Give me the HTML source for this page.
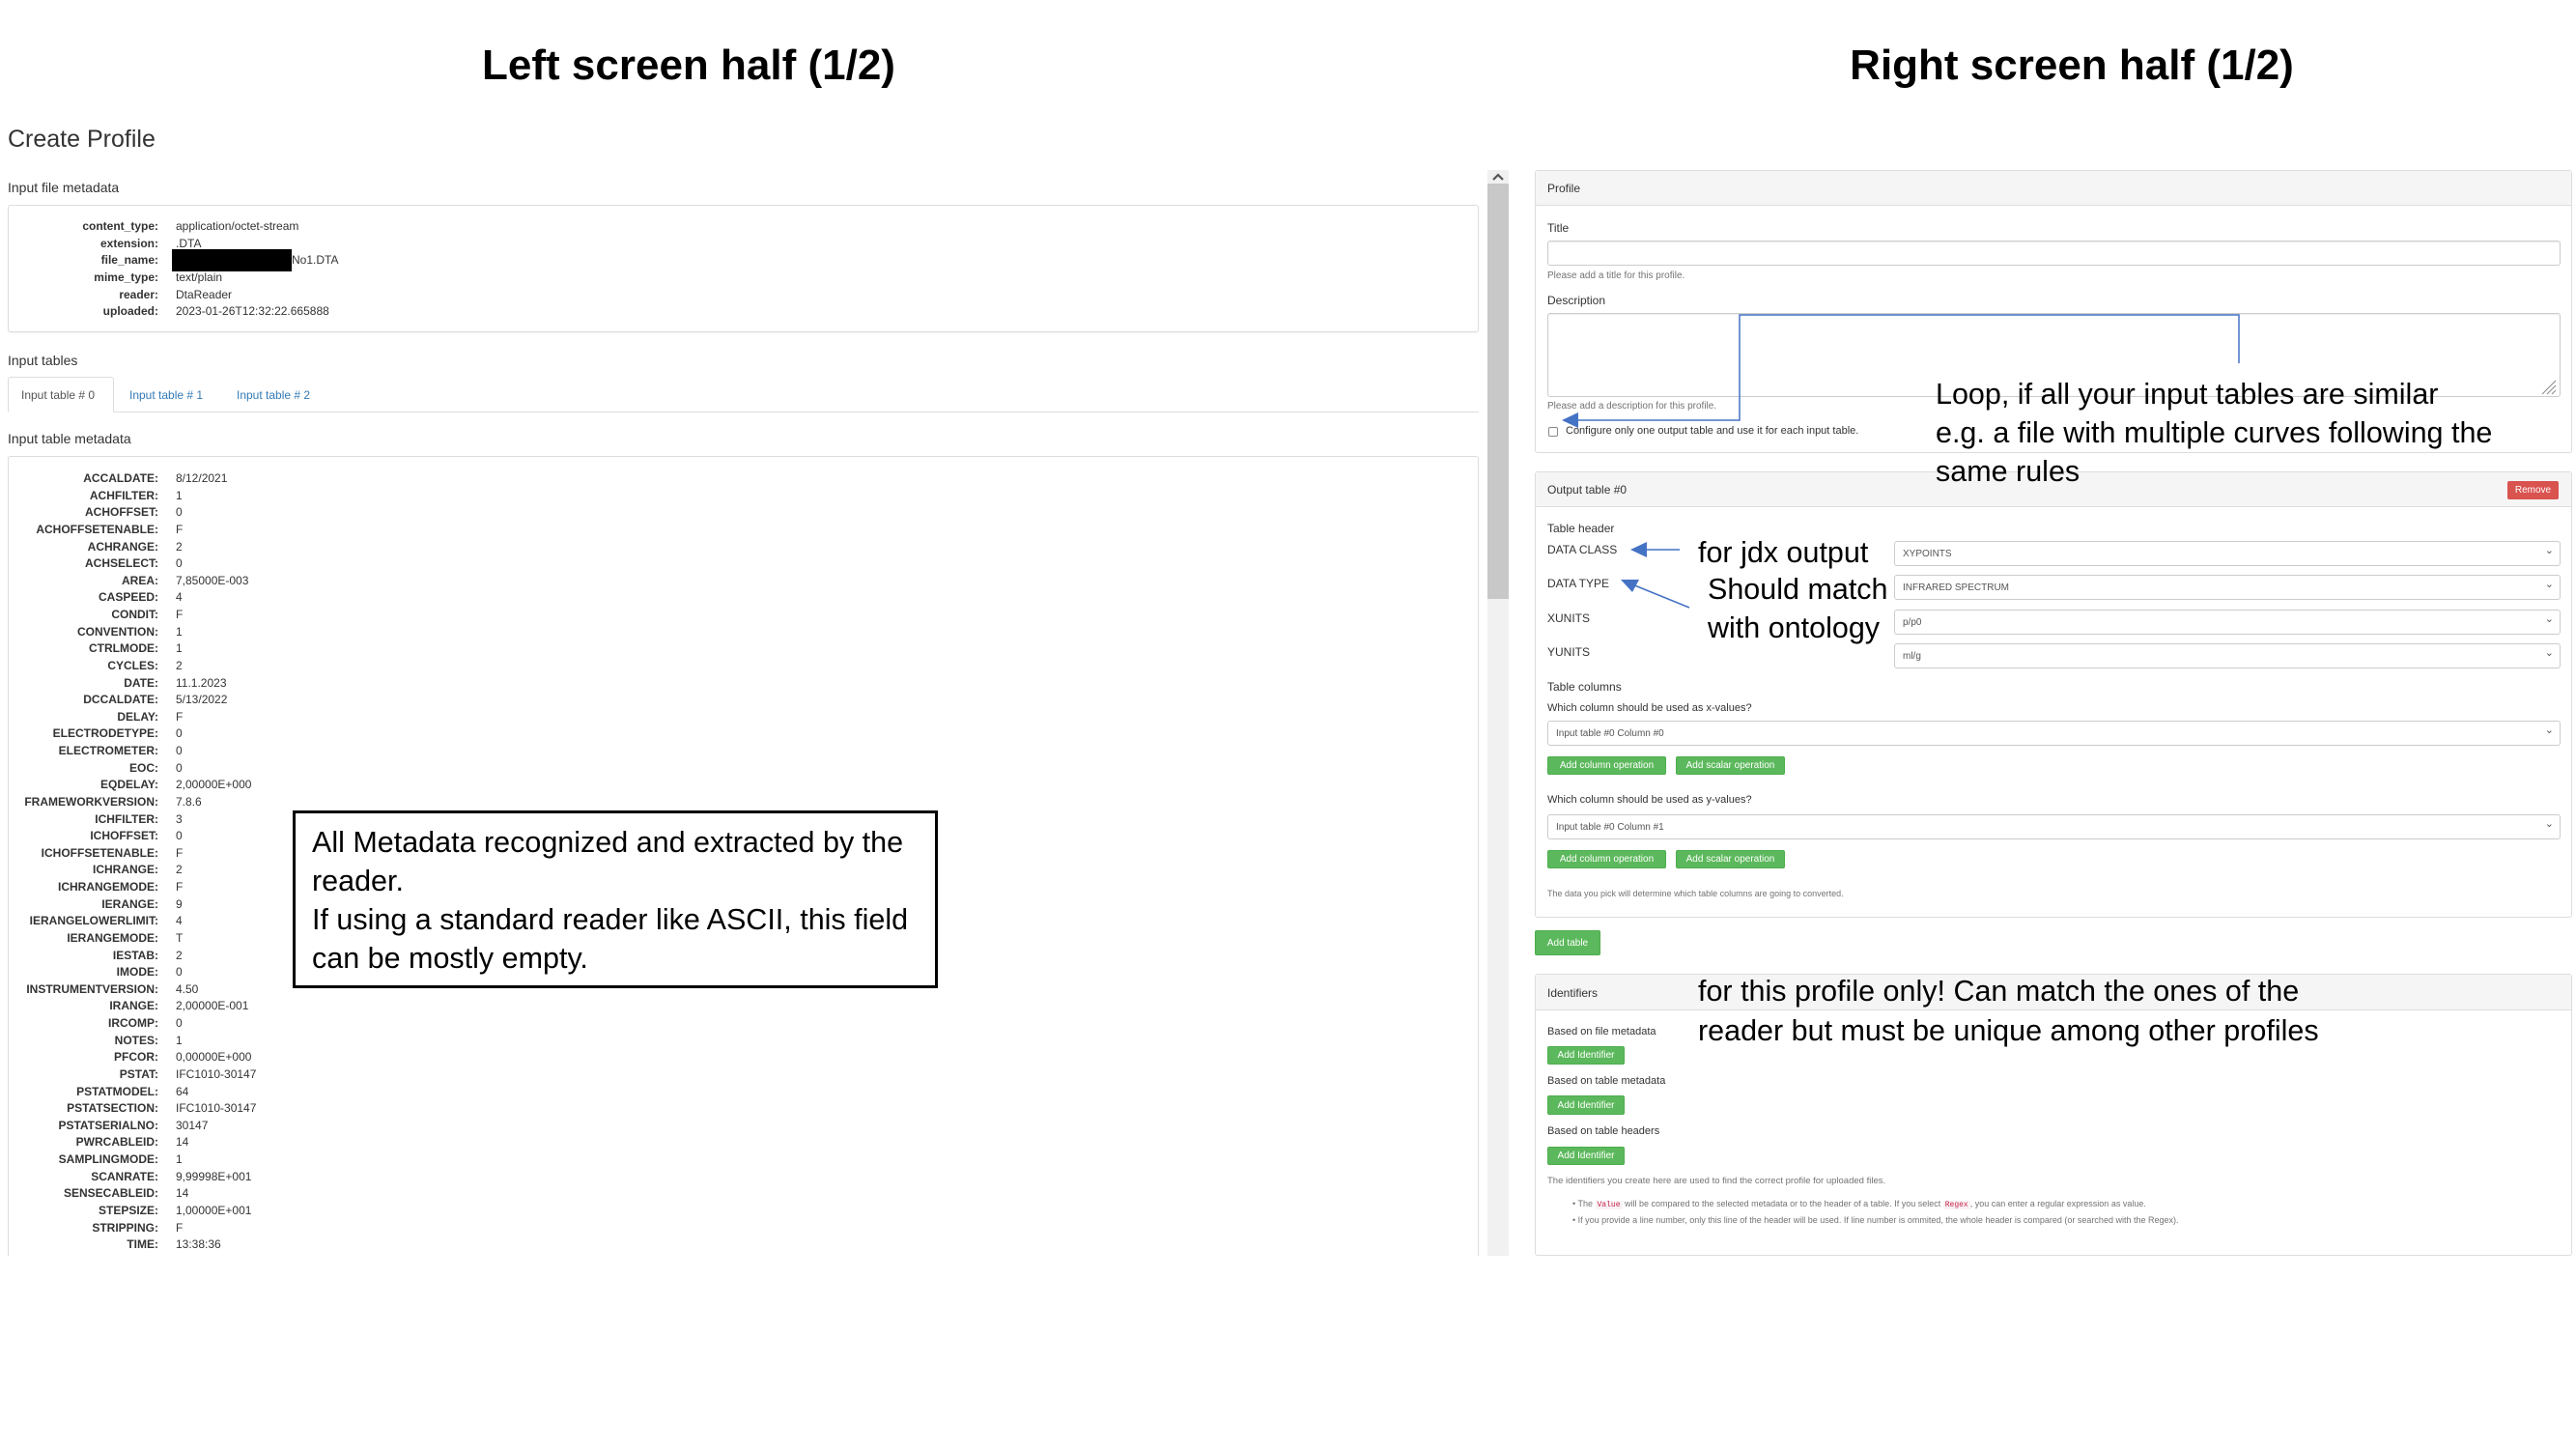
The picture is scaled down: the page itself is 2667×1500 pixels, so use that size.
<!DOCTYPE html>
<html><head><meta charset="utf-8"><style>
*{margin:0;padding:0;box-sizing:border-box}
body{width:2667px;height:1500px;background:#fff;position:relative;overflow:hidden;font-family:"Liberation Sans",Arial,sans-serif;color:#333}
.a{position:absolute;white-space:nowrap}
.h{font-weight:bold;font-size:44px;color:#000;transform:translateX(-50%);line-height:1}
.box{position:absolute;border:1px solid #ddd;border-radius:3px;box-shadow:0 1px 1px rgba(0,0,0,.05)}
.rows{position:absolute;font-size:12px;line-height:17.63px}
.rows .r{position:relative;height:17.63px;white-space:nowrap}
.rows .k{position:absolute;right:0;font-weight:bold;text-align:right;white-space:nowrap}
.rows .v{position:absolute;white-space:nowrap}
.card{position:absolute;left:1589px;width:1074px;border:1px solid #ddd;border-radius:3px;background:#fff}
.ch{background:#f5f5f5;border-bottom:1px solid #ddd;height:36px;font-size:12px;padding:11px 12px}
.lbl{font-size:12px}
.help{font-size:10px;color:#737373}
.inp{position:absolute;border:1px solid #ccc;border-radius:3px;box-shadow:inset 0 1px 1px rgba(0,0,0,.075);background:#fff}
.sel{position:absolute;border:1px solid #ccc;border-radius:3px;background:#fff;font-size:10px;color:#555;padding-left:8px;display:flex;align-items:center}
.sel:after{content:"\2304";position:absolute;right:6px;top:2px;font-size:11px;color:#555}
.btn{position:absolute;background:#5cb85c;border:1px solid #4cae4c;border-radius:2px;color:#fff;font-size:10px;display:flex;align-items:center;justify-content:center}
.note{font-size:30.5px;color:#000;line-height:40px}
</style></head><body>
<div class="a h" style="left:713px;top:46px">Left screen half (1/2)</div>
<div class="a h" style="left:2145px;top:46px">Right screen half (1/2)</div>

<div class="a" style="left:8px;top:130px;font-size:25px;color:#333">Create Profile</div>
<div class="a" style="left:8px;top:186px;font-size:14px">Input file metadata</div>
<div class="box" style="left:8px;top:212px;width:1523px;height:132px"></div>
<div class="rows" style="left:0;top:226px;width:164px">
<div class="r"><span class="k">content_type:</span><span class="v" style="left:182px">application/octet-stream</span></div>
<div class="r"><span class="k">extension:</span><span class="v" style="left:182px">.DTA</span></div>
<div class="r"><span class="k">file_name:</span><span class="v" style="left:302px">No1.DTA</span></div>
<div class="r"><span class="k">mime_type:</span><span class="v" style="left:182px">text/plain</span></div>
<div class="r"><span class="k">reader:</span><span class="v" style="left:182px">DtaReader</span></div>
<div class="r"><span class="k">uploaded:</span><span class="v" style="left:182px">2023-01-26T12:32:22.665888</span></div>
</div>
<div class="a" style="left:178px;top:258px;width:124px;height:23px;background:#000"></div>

<div class="a" style="left:8px;top:365px;font-size:14px">Input tables</div>
<div class="a" style="left:8px;top:426px;width:1523px;border-top:1px solid #ddd"></div>
<div class="a" style="left:8px;top:390px;width:110px;height:37px;border:1px solid #ddd;border-bottom:1px solid #fff;border-radius:3px 3px 0 0;background:#fff"></div>
<div class="a" style="left:22px;top:402px;font-size:12px;color:#555">Input table # 0</div>
<div class="a" style="left:134px;top:402px;font-size:12px;color:#337ab7">Input table # 1</div>
<div class="a" style="left:245px;top:402px;font-size:12px;color:#337ab7">Input table # 2</div>

<div class="a" style="left:8px;top:446px;font-size:14px">Input table metadata</div>
<div class="a" style="left:8px;top:472px;width:1523px;height:840px;border:1px solid #ddd;border-bottom:none;border-radius:3px 3px 0 0"></div>
<div class="a" style="left:0;top:1300px;width:1540px;height:200px;background:#fff"></div>
<div class="rows" style="left:0;top:487px;width:164px">
<div class="r"><span class="k">ACCALDATE:</span><span class="v" style="left:182px">8/12/2021</span></div>
<div class="r"><span class="k">ACHFILTER:</span><span class="v" style="left:182px">1</span></div>
<div class="r"><span class="k">ACHOFFSET:</span><span class="v" style="left:182px">0</span></div>
<div class="r"><span class="k">ACHOFFSETENABLE:</span><span class="v" style="left:182px">F</span></div>
<div class="r"><span class="k">ACHRANGE:</span><span class="v" style="left:182px">2</span></div>
<div class="r"><span class="k">ACHSELECT:</span><span class="v" style="left:182px">0</span></div>
<div class="r"><span class="k">AREA:</span><span class="v" style="left:182px">7,85000E-003</span></div>
<div class="r"><span class="k">CASPEED:</span><span class="v" style="left:182px">4</span></div>
<div class="r"><span class="k">CONDIT:</span><span class="v" style="left:182px">F</span></div>
<div class="r"><span class="k">CONVENTION:</span><span class="v" style="left:182px">1</span></div>
<div class="r"><span class="k">CTRLMODE:</span><span class="v" style="left:182px">1</span></div>
<div class="r"><span class="k">CYCLES:</span><span class="v" style="left:182px">2</span></div>
<div class="r"><span class="k">DATE:</span><span class="v" style="left:182px">11.1.2023</span></div>
<div class="r"><span class="k">DCCALDATE:</span><span class="v" style="left:182px">5/13/2022</span></div>
<div class="r"><span class="k">DELAY:</span><span class="v" style="left:182px">F</span></div>
<div class="r"><span class="k">ELECTRODETYPE:</span><span class="v" style="left:182px">0</span></div>
<div class="r"><span class="k">ELECTROMETER:</span><span class="v" style="left:182px">0</span></div>
<div class="r"><span class="k">EOC:</span><span class="v" style="left:182px">0</span></div>
<div class="r"><span class="k">EQDELAY:</span><span class="v" style="left:182px">2,00000E+000</span></div>
<div class="r"><span class="k">FRAMEWORKVERSION:</span><span class="v" style="left:182px">7.8.6</span></div>
<div class="r"><span class="k">ICHFILTER:</span><span class="v" style="left:182px">3</span></div>
<div class="r"><span class="k">ICHOFFSET:</span><span class="v" style="left:182px">0</span></div>
<div class="r"><span class="k">ICHOFFSETENABLE:</span><span class="v" style="left:182px">F</span></div>
<div class="r"><span class="k">ICHRANGE:</span><span class="v" style="left:182px">2</span></div>
<div class="r"><span class="k">ICHRANGEMODE:</span><span class="v" style="left:182px">F</span></div>
<div class="r"><span class="k">IERANGE:</span><span class="v" style="left:182px">9</span></div>
<div class="r"><span class="k">IERANGELOWERLIMIT:</span><span class="v" style="left:182px">4</span></div>
<div class="r"><span class="k">IERANGEMODE:</span><span class="v" style="left:182px">T</span></div>
<div class="r"><span class="k">IESTAB:</span><span class="v" style="left:182px">2</span></div>
<div class="r"><span class="k">IMODE:</span><span class="v" style="left:182px">0</span></div>
<div class="r"><span class="k">INSTRUMENTVERSION:</span><span class="v" style="left:182px">4.50</span></div>
<div class="r"><span class="k">IRANGE:</span><span class="v" style="left:182px">2,00000E-001</span></div>
<div class="r"><span class="k">IRCOMP:</span><span class="v" style="left:182px">0</span></div>
<div class="r"><span class="k">NOTES:</span><span class="v" style="left:182px">1</span></div>
<div class="r"><span class="k">PFCOR:</span><span class="v" style="left:182px">0,00000E+000</span></div>
<div class="r"><span class="k">PSTAT:</span><span class="v" style="left:182px">IFC1010-30147</span></div>
<div class="r"><span class="k">PSTATMODEL:</span><span class="v" style="left:182px">64</span></div>
<div class="r"><span class="k">PSTATSECTION:</span><span class="v" style="left:182px">IFC1010-30147</span></div>
<div class="r"><span class="k">PSTATSERIALNO:</span><span class="v" style="left:182px">30147</span></div>
<div class="r"><span class="k">PWRCABLEID:</span><span class="v" style="left:182px">14</span></div>
<div class="r"><span class="k">SAMPLINGMODE:</span><span class="v" style="left:182px">1</span></div>
<div class="r"><span class="k">SCANRATE:</span><span class="v" style="left:182px">9,99998E+001</span></div>
<div class="r"><span class="k">SENSECABLEID:</span><span class="v" style="left:182px">14</span></div>
<div class="r"><span class="k">STEPSIZE:</span><span class="v" style="left:182px">1,00000E+001</span></div>
<div class="r"><span class="k">STRIPPING:</span><span class="v" style="left:182px">F</span></div>
<div class="r"><span class="k">TIME:</span><span class="v" style="left:182px">13:38:36</span></div>
</div>

<div class="a" style="left:303px;top:839px;width:668px;height:184px;border:3px solid #000;background:#fff"></div>
<div class="a note" style="left:323px;top:852px">All Metadata recognized and extracted by the<br>reader.<br>If using a standard reader like ASCII, this field<br>can be mostly empty.</div>

<!-- scrollbar -->
<div class="a" style="left:1540px;top:176px;width:22px;height:1124px;background:#f1f1f1"></div>
<div class="a" style="left:1540px;top:190px;width:22px;height:430px;background:#c8c8c8"></div>
<svg class="a" style="left:1545px;top:179px" width="12" height="8"><path d="M1 7 L6 2 L11 7" stroke="#555" stroke-width="2.2" fill="none"/></svg>

<!-- right -->
<div class="card" style="top:176px;height:293px">
<div class="ch">Profile</div>
</div>
<div class="a lbl" style="left:1602px;top:229px">Title</div>
<div class="inp" style="left:1602px;top:249px;width:1049px;height:26px"></div>
<div class="a help" style="left:1602px;top:280px">Please add a title for this profile.</div>
<div class="a lbl" style="left:1602px;top:304px">Description</div>
<div class="inp" style="left:1602px;top:324px;width:1049px;height:87px"></div>
<svg class="a" style="left:2628px;top:390px" width="20" height="20"><path d="M18 4 L4 18 M18 9 L9 18 M18 14 L14 18" stroke="#888" stroke-width="1"/></svg>
<div class="a help" style="left:1602px;top:415px">Please add a description for this profile.</div>
<div class="a" style="left:1603px;top:442px;width:10px;height:10px;border:1px solid #888;border-radius:2px"></div>
<div class="a" style="left:1621px;top:440px;font-size:11px">Configure only one output table and use it for each input table.</div>

<div class="card" style="top:488px;height:462px">
<div class="ch">Output table #0</div>
</div>
<div class="a" style="left:2596px;top:498px;width:53px;height:19px;background:#d9534f;border-radius:2px;color:#fff;font-size:10px;display:flex;align-items:center;justify-content:center">Remove</div>
<div class="a lbl" style="left:1602px;top:540px">Table header</div>
<div class="a lbl" style="left:1602px;top:562px">DATA CLASS</div>
<div class="a lbl" style="left:1602px;top:597px">DATA TYPE</div>
<div class="a lbl" style="left:1602px;top:633px">XUNITS</div>
<div class="a lbl" style="left:1602px;top:668px">YUNITS</div>
<div class="sel" style="left:1961px;top:560px;width:690px;height:26px">XYPOINTS</div>
<div class="sel" style="left:1961px;top:595px;width:690px;height:26px">INFRARED SPECTRUM</div>
<div class="sel" style="left:1961px;top:631px;width:690px;height:26px">p/p0</div>
<div class="sel" style="left:1961px;top:666px;width:690px;height:26px">ml/g</div>
<div class="a lbl" style="left:1602px;top:704px">Table columns</div>
<div class="a" style="left:1602px;top:727px;font-size:11px">Which column should be used as x-values?</div>
<div class="sel" style="left:1602px;top:746px;width:1049px;height:26px">Input table #0 Column #0</div>
<div class="btn" style="left:1602px;top:783px;width:123px;height:19px">Add column operation</div>
<div class="btn" style="left:1735px;top:783px;width:113px;height:19px">Add scalar operation</div>
<div class="a" style="left:1602px;top:822px;font-size:11px">Which column should be used as y-values?</div>
<div class="sel" style="left:1602px;top:843px;width:1049px;height:26px">Input table #0 Column #1</div>
<div class="btn" style="left:1602px;top:880px;width:123px;height:19px">Add column operation</div>
<div class="btn" style="left:1735px;top:880px;width:113px;height:19px">Add scalar operation</div>
<div class="a help" style="left:1602px;top:920px;font-size:9px">The data you pick will determine which table columns are going to converted.</div>

<div class="btn" style="left:1589px;top:963px;width:68px;height:26px;font-size:10px">Add table</div>

<div class="card" style="top:1008px;height:292px">
<div class="ch" style="height:37px;padding-top:12px">Identifiers</div>
</div>
<div class="a" style="left:1602px;top:1062px;font-size:11px">Based on file metadata</div>
<div class="btn" style="left:1602px;top:1083px;width:80px;height:19px">Add Identifier</div>
<div class="a" style="left:1602px;top:1113px;font-size:11px">Based on table metadata</div>
<div class="btn" style="left:1602px;top:1134px;width:80px;height:20px">Add Identifier</div>
<div class="a" style="left:1602px;top:1165px;font-size:11px">Based on table headers</div>
<div class="btn" style="left:1602px;top:1187px;width:80px;height:19px">Add Identifier</div>
<div class="a help" style="left:1602px;top:1217px;font-size:9.5px">The identifiers you create here are used to find the correct profile for uploaded files.</div>
<div class="a help" style="left:1628px;top:1241px;font-size:9px">• The <span style="color:#c7254e;background:#f9f2f4;font-family:'Liberation Mono',monospace;font-size:8px;padding:0 2px">Value</span> will be compared to the selected metadata or to the header of a table. If you select <span style="color:#c7254e;background:#f9f2f4;font-family:'Liberation Mono',monospace;font-size:8px;padding:0 2px">Regex</span>, you can enter a regular expression as value.</div>
<div class="a help" style="left:1628px;top:1258px;font-size:9px">• If you provide a line number, only this line of the header will be used. If line number is ommited, the whole header is compared (or searched with the Regex).</div>

<!-- annotations on top -->
<svg class="a" style="left:0;top:0;overflow:visible" width="2667" height="1500">
<path d="M2318 376 V326 H1801 V435 H1630" stroke="#4472c4" stroke-width="1.5" fill="none"/>
<path d="M1617 435 L1634 427 L1634 443 Z" fill="#4472c4"/>
<path d="M1739 569 H1700" stroke="#4472c4" stroke-width="1.5"/>
<path d="M1688 569 L1705 561 L1705 577 Z" fill="#4472c4"/>
<path d="M1749 629 L1690 605" stroke="#4472c4" stroke-width="1.5"/>
<path d="M1678 600 L1697 600 L1690 613 Z" fill="#4472c4"/>
</svg>
<div class="a note" style="left:2004px;top:388px">Loop, if all your input tables are similar<br>e.g. a file with multiple curves following the<br>same rules</div>
<div class="a note" style="left:1758px;top:552px">for jdx output</div>
<div class="a note" style="left:1768px;top:590px">Should match</div>
<div class="a note" style="left:1768px;top:630px">with ontology</div>
<div class="a note" style="left:1758px;top:1006px">for this profile only! Can match the ones of the</div>
<div class="a note" style="left:1758px;top:1047px">reader but must be unique among other profiles</div>
</body></html>
